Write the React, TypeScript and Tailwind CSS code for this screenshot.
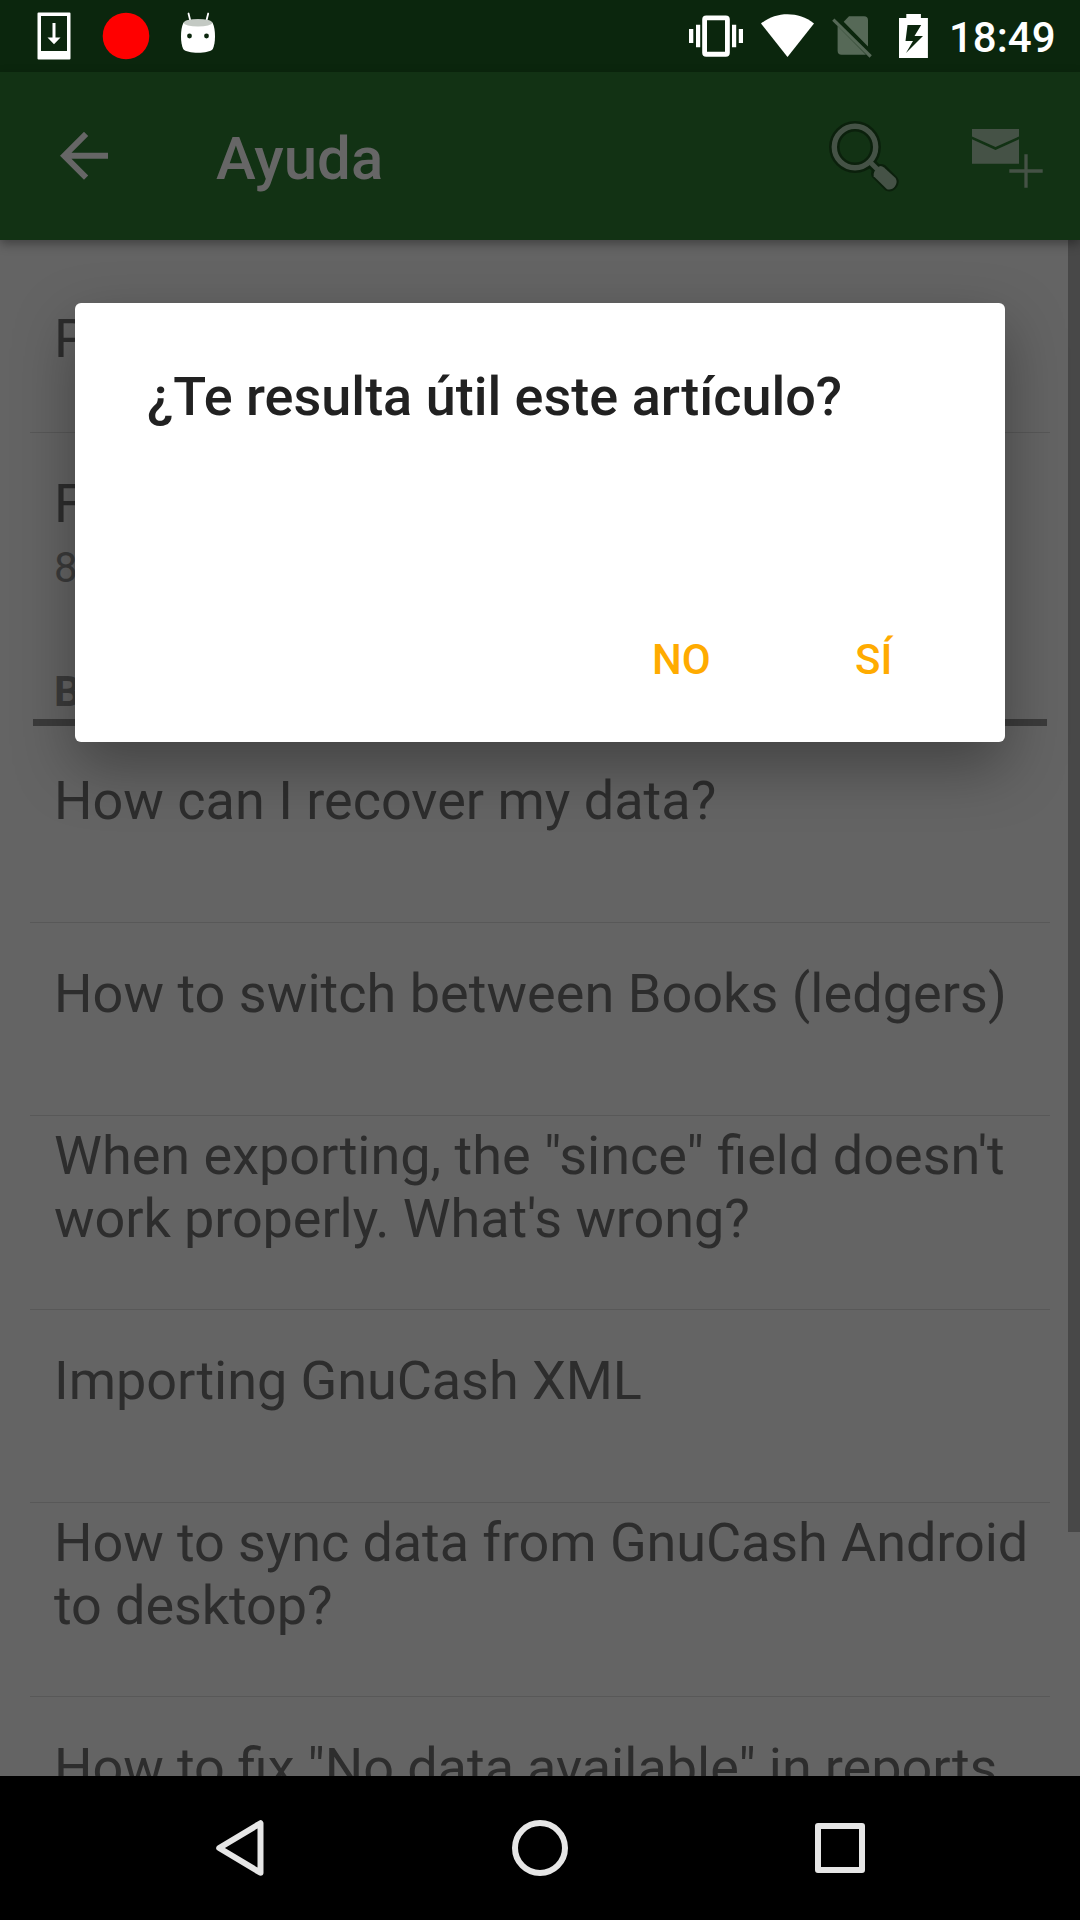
import React from "react";

function Divider() {
  return <div className="mx-[30px] h-px shrink-0 bg-[#585858]" />;
}

function Row({ size, className, children }: { size: string; className: string; children: React.ReactNode }) {
  return (
    <>
      <div className={`${size} ${className} flex shrink-0 flex-col pl-[54px] text-[54px] leading-[63px] whitespace-nowrap text-[#2d2d2d]`}>
        {children}
      </div>
      <Divider />
    </>
  );
}

function StatusBar() {
  return (
    <div className="flex h-[72px] shrink-0 bg-[#0b260d]">
      <svg width="360" height="72" viewBox="0 0 360 72">
        <path fillRule="evenodd" fill="#fff" d="M38.500 12.500h31a1 1 0 0 1 1 1v45a1 1 0 0 1-1 1h-31a1 1 0 0 1-1-1v-45a1 1 0 0 1 1-1zM41 16v35h26V16z" />
        <path fill="#fff" d="M52.500 23h3v14.500h5L54 44.200l-6.500-6.700h5z" />
        <circle cx="126" cy="36" r="23.300" fill="#f00" />
        <path stroke="#fff" strokeWidth="1.800" strokeLinecap="round" d="M188.500 13.500l2 8M208.200 13.500l-2 8" />
        <path fill="#fff" d="M183.500 22.500c-2 4-2.500 9-2.500 14s.8 9.500 2.200 12.500c2 2.500 8 3.800 14.800 3.800s12.800-1.300 14.800-3.800c1.400-3 2.200-7.500 2.200-12.500s-.5-10-2.500-14z" />
        <ellipse cx="198" cy="22.800" rx="14.200" ry="3.800" fill="#c3c9c3" />
        <circle cx="189.500" cy="36" r="2.400" fill="#0b260d" />
        <circle cx="206.500" cy="36" r="2.400" fill="#0b260d" />
      </svg>
      <div className="flex-1" />
      <svg width="260" height="72" viewBox="680 0 260 72">
        <path fill="#fff" fillRule="evenodd" d="M706.200 15.600h19.600q4 0 4 4v33.200q0 4-4 4h-19.600q-4 0-4-4V19.600q0-4 4-4zM707 20.300v31.400h18V20.300z" />
        <path fill="#fff" d="M689 29h4.300v14H689zM696 24.800h4.200v22.400H696zM732 24.800h4.200v22.400H732zM738.800 29h4.200v14h-4.200z" />
        <path fill="#fff" d="M761 23.500C769 17 778 14.200 787.500 14.200S806 17 814 23.500L787.500 57z" />
        <path fill="#566957" d="M849 16.300h15q4 0 4 4v26.300L843.700 21.700zM837.600 26L866 54.700h-24.400q-4 0-4-4z" />
        <path stroke="#566957" strokeWidth="3.200" d="M833.300 19.700L870.700 56.500" />
        <path fill="#fff" fillRule="evenodd" d="M906.300 14h14.600v4h7v40h-28.900V18h7.300zM907.500 25l-2 16h7.500l-7 12 17-17h-8.500l6.700-11z" />
      </svg>
      <div className="w-[140px] pl-[9px] pt-[13px] text-[42px] leading-[49px] font-medium text-white">18:49</div>
    </div>
  );
}

function AppBar() {
  return (
    <div className="relative z-10 flex h-[168px] shrink-0 items-center bg-[#123214] text-[#666] shadow-[0_4px_10px_rgba(0,0,0,0.35)]">
      <svg className="ml-[60px]" width="48" height="48" viewBox="0 0 48 48">
        <path fill="#666" transform="translate(0 -.2)" d="M48 21v6H11.500l16.700 16.800L24 48 0 24 24 0l4.200 4.200L11.500 21z" />
      </svg>
      <div className="ml-[108px] pt-[5px] text-[60px] leading-[70px] font-medium">Ayuda</div>
      <div className="flex-1" />
      <svg width="260" height="168" viewBox="820 72 260 168">
        <g fill="none" stroke="#0b200c" strokeLinejoin="round">
          <circle cx="855" cy="147" r="20.700" strokeWidth="10.500" />
          <path strokeWidth="10" d="M870 162l6 6" />
          <path fill="#0b200c" strokeWidth="5" d="M877.500 167.500q3-2 6.500 0l11 11q2.500 3.500-.5 7.500t-7.500 2.500l-13-13q-1.500-4 3.500-8z" />
        </g>
        <circle cx="855" cy="147" r="20.700" fill="none" stroke="#455246" strokeWidth="5.400" />
        <path stroke="#455246" strokeWidth="5" d="M869 161l8 8" />
        <path fill="#455246" d="M877.500 167.500q3-3 6.500 0l11.500 10.500q2.500 4-.5 8.300t-8 3l-13.300-13q-1-4 3.800-8.800z" />
        <path fill="#455246" d="M972 129h47v7.500L995.500 147 972 136.500zM972 139.300l23.500 10.700 23.500-10.700V163.700h-47z" />
        <path stroke="#455246" strokeWidth="3.300" d="M1009.300 171h33.400M1026 154.300v33.400" />
      </svg>
    </div>
  );
}

function Dialog() {
  return (
    <div className="absolute top-[303px] left-[75px] z-20 flex h-[439px] w-[930px] flex-col rounded-[6px] bg-white shadow-[0_24px_60px_rgba(0,0,0,0.34)]">
      <div className="pt-[62px] pl-[72px] text-[54px] leading-[63px] font-medium whitespace-nowrap text-[#212121]">¿Te resulta útil este artículo?</div>
      <div className="mt-auto flex pb-[58px] text-[42px] leading-[49px] font-medium text-[#ffab00]">
        <span className="ml-[577px] w-[203px]">NO</span>
        <span>SÍ</span>
      </div>
    </div>
  );
}

function NavBar() {
  return (
    <div className="relative z-10 flex h-[144px] shrink-0 items-center bg-black">
      <svg width="1080" height="144" viewBox="0 1776 1080 144" fill="none" stroke="#e6e6e6" strokeLinejoin="round">
        <path strokeWidth="6" d="M260.500 1823.200v49.600L219.200 1848z" />
        <circle cx="540" cy="1848" r="25" strokeWidth="6" />
        <rect x="818" y="1826" width="44" height="44" strokeWidth="6" />
      </svg>
    </div>
  );
}

export default function App() {
  return (
    <div className="relative flex h-[1920px] w-[1080px] flex-col overflow-hidden bg-[#646464] font-['Roboto',sans-serif]">
      <StatusBar />
      <AppBar />
      <div className="relative flex min-h-0 flex-1 flex-col overflow-hidden">
        <Row size="h-[192px]" className="pt-[67px]">P</Row>
        <div className="flex h-[193px] shrink-0 flex-col pt-[39px] pl-[54px] text-[54px] leading-[63px] text-[#2d2d2d]">
          <span>F</span>
          <span className="mt-[8px] text-[42px] leading-[49px] text-[#3b3b3b]">8</span>
        </div>
        <div className="h-[93px] shrink-0 pt-[41px] pl-[54px] text-[42px] leading-[49px] font-bold text-[#3b3b3b]">B</div>
        <div className="mx-[33px] h-[7px] shrink-0 bg-[#3b3b3b]" />
        <Row size="h-[196px]" className="pt-[43px]">How can I recover my data?</Row>
        <Row size="h-[192px]" className="pt-[39px] tracking-[0.035px]">How to switch between Books (ledgers)</Row>
        <Row size="h-[193px]" className="pt-[8px]">
          <span>When exporting, the "since" field doesn't</span>
          <span className="tracking-[-0.09px]">work properly. What's wrong?</span>
        </Row>
        <Row size="h-[192px]" className="pt-[39px] tracking-[-0.06px]">Importing GnuCash XML</Row>
        <Row size="h-[193px]" className="pt-[8px] tracking-[-0.09px]">
          <span>How to sync data from GnuCash Android</span>
          <span>to desktop?</span>
        </Row>
        <Row size="h-[192px]" className="pt-[39px] [word-spacing:-0.4px]">How to fix "No data available" in reports</Row>
        <div className="absolute top-0 right-0 h-[1292px] w-[12px] bg-[#484848]" />
      </div>
      <NavBar />
      <Dialog />
    </div>
  );
}
